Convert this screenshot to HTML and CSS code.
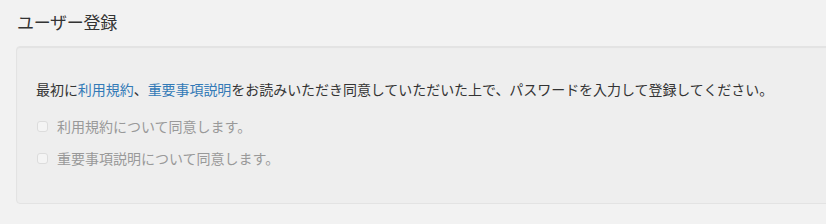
FILE: index.html
```html
<!DOCTYPE html>
<html lang="ja">
<head>
<meta charset="utf-8">
<title>ユーザー登録</title>
<link rel="stylesheet" href="styles.css">
</head>
<body>
<div class="page">
  <h1 class="title">ユーザー登録</h1>
  <div class="well">
    <p class="intro">最初に<a href="#" class="link">利用規約</a>、<a href="#" class="link">重要事項説明</a>をお読みいただき同意していただいた上で、パスワードを入力して登録してください。</p>
    <label class="check-row"><span class="box"></span><span class="check-label">利用規約について同意します。</span></label>
    <label class="check-row"><span class="box"></span><span class="check-label">重要事項説明について同意します。</span></label>
  </div>
</div>
</body>
</html>
```
FILE: styles.css
```css
html, body {
  margin: 0;
  padding: 0;
  background: #f2f2f2;
  overflow: hidden;
}
body {
  font-family: "Noto Sans CJK JP", "Noto Sans", sans-serif;
  color: #333;
}
.page {
  padding: 12px 0 0 16px;
}
.title {
  margin: 0 0 14px 1px;
  font-size: 17px;
  font-weight: normal;
  line-height: 20px;
  color: #333;
  letter-spacing: -0.3px;
}
.well {
  width: 840px;
  box-sizing: border-box;
  background: #eeeeee;
  border: 1px solid #e3e3e3;
  border-radius: 4px;
  box-shadow: inset 0 1px 1px rgba(0,0,0,0.05);
  padding: 32px 18px 35px 19px;
  display: flex;
  flex-direction: column;
  gap: 12px;
}
.intro {
  margin: 0 0 5px 0;
  font-size: 14px;
  line-height: 20px;
  letter-spacing: -0.05px;
}
.link {
  color: #337ab7;
  text-decoration: none;
}
.check-row {
  display: flex;
  align-items: center;
  height: 20px;
  gap: 9px;
  padding-left: 1px;
}
.box {
  width: 11px;
  height: 11px;
  border: 1px solid #dcdcdc;
  border-radius: 3px;
  background: #f4f4f4;
  box-sizing: border-box;
}
.check-label {
  font-size: 14px;
  line-height: 20px;
  color: #999;
  letter-spacing: 0;
}
```
